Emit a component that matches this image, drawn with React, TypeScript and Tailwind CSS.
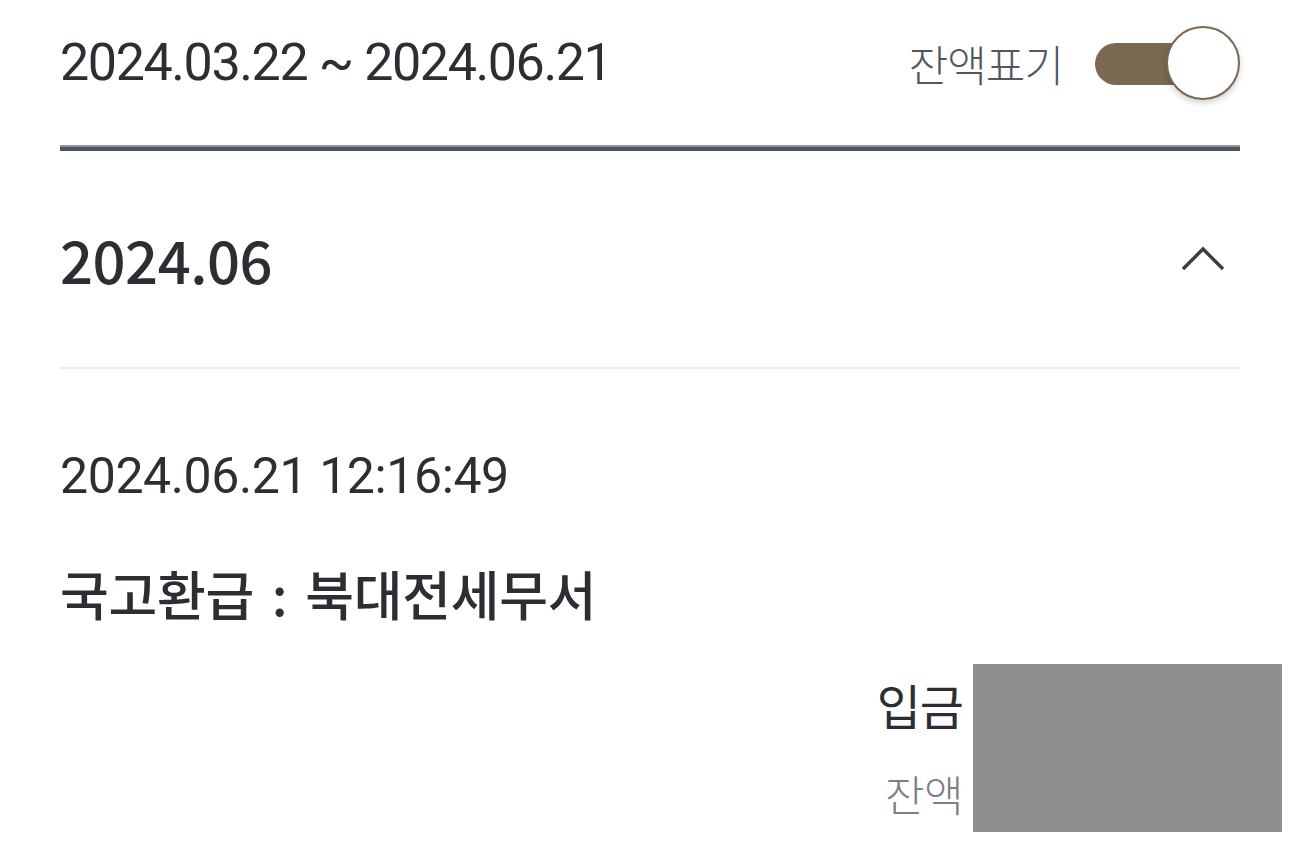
export default function App() {
  return (
    <div className="min-h-screen w-full bg-white font-['Roboto','Noto_Sans_CJK_KR',sans-serif] text-[#2b2e33]">
      <div className="pl-[60px] pr-[68px]">
        {/* period + balance toggle */}
        <div className="flex h-[126px] items-center justify-between">
          <div className="text-[52px] leading-none tracking-[-1.4px]">2024.03.22 ~ 2024.06.21</div>
          <div className="flex items-center gap-[32px]">
            <span className="font-['Noto_Sans_CJK_KR',sans-serif] text-[43px] font-light leading-none tracking-[-1px] text-[#54585e]">
              잔액표기
            </span>
            <div className="relative h-[74px] w-[145px]">
              <div className="absolute left-0 top-[17px] h-[42px] w-[120px] rounded-full bg-[#7a6852]" />
              <div className="absolute right-0 top-0 h-[74px] w-[74px] rounded-full border-2 border-[#7a6852] bg-white shadow-[0_3px_6px_rgba(0,0,0,0.18)]" />
            </div>
          </div>
        </div>
        <div className="mt-[19px]">
          <div className="h-[2px] bg-[#8e959c]" />
          <div className="h-[4px] bg-[#4d545c]" />
        </div>

        {/* month header */}
        <div className="flex h-[216px] items-center justify-between">
          <div className="font-['Noto_Sans_CJK_KR',sans-serif] text-[58px] font-medium leading-none tracking-[-0.5px]">
            2024.06
          </div>
          <svg width="46" height="26" viewBox="0 0 46 26" className="mr-[14px]">
            <polyline points="3,23 23,3 43,23" fill="none" stroke="#3a3d42" strokeWidth="3.4" />
          </svg>
        </div>
        <div className="h-[2px] bg-[#ececec]" />

        {/* transaction */}
        <div className="mt-[82px] h-[50px] text-[50px] leading-[50px] tracking-[-0.4px]">2024.06.21 12:16:49</div>
        <div className="mt-[67px] flex h-[50px] items-center font-['Noto_Sans_CJK_KR',sans-serif] text-[53px] font-medium leading-[50px] tracking-[-0.3px]">
          <span>국고환급</span>
          <span className="mx-[18px]">:</span>
          <span>북대전세무서</span>
        </div>
        <div className="mr-[-42px] mt-[46px] flex items-start justify-end">
          <div className="mr-[10px] flex flex-col items-end font-['Noto_Sans_CJK_KR',sans-serif]">
            <div className="h-[80px] text-[48px] font-normal leading-[80px] tracking-[-1px]">입금</div>
            <div className="mt-[24px] h-[50px] text-[43px] font-light leading-[50px] tracking-[-0.5px] text-[#7b8088]">잔액</div>
          </div>
          <div className="h-[168px] w-[309px] bg-[#8f8f8f]" />
        </div>
      </div>
    </div>
  );
}
